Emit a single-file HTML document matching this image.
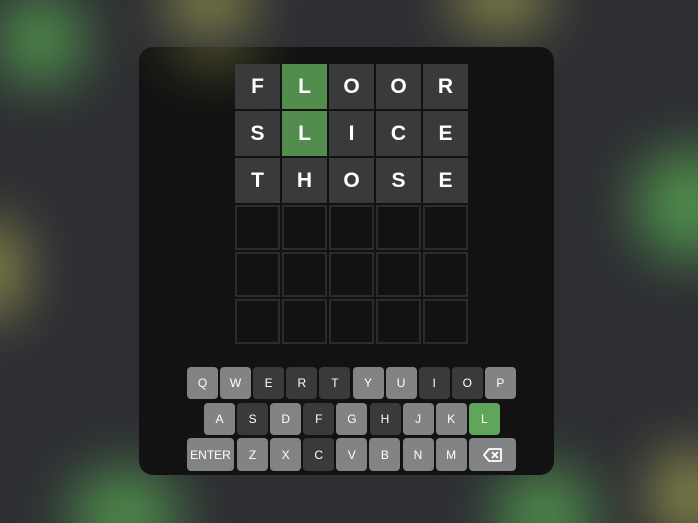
<!DOCTYPE html>
<html><head><meta charset="utf-8"><style>
*{margin:0;padding:0;box-sizing:border-box}
html,body{width:698px;height:523px;overflow:hidden}
body{background:#2e2f33;font-family:"Liberation Sans",sans-serif}
#wrap{position:relative;width:698px;height:523px;overflow:hidden}
.blob{position:absolute;border-radius:50%;filter:blur(28px)}
.g{background:#4f8f4c}
.y{background:#8a8a4c}
#panel{position:absolute;left:139px;top:47px;width:415px;height:428px;background:#121212;border-radius:14px;overflow:hidden}
.tile{position:absolute;width:45px;height:45px;display:flex;align-items:center;justify-content:center;color:#fff;font-weight:bold;font-size:21px;background:#3a3a3c}
.tile.gr{background:#538d4e}
.tile.e{background:#121212;border:2px solid #2c2c2e}
.key{position:absolute;height:32px;border-radius:4px;display:flex;align-items:center;justify-content:center;color:#fff;font-size:12px;background:#818384}
.key.d{background:#3a3a3c}
.key.gr{background:#5fa65c}
</style></head><body><div id="wrap">
<div class="blob g" style="left:-5px;top:-5px;width:90px;height:90px"></div>
<div class="blob y" style="left:165px;top:-30px;width:90px;height:65px"></div>
<div class="blob y" style="left:450px;top:-35px;width:100px;height:65px"></div>
<div class="blob g" style="left:635px;top:150px;width:110px;height:110px"></div>
<div class="blob y" style="left:-45px;top:220px;width:70px;height:100px"></div>
<div class="blob g" style="left:70px;top:470px;width:110px;height:90px"></div>
<div class="blob g" style="left:495px;top:470px;width:100px;height:90px"></div>
<div class="blob y" style="left:650px;top:450px;width:80px;height:90px"></div>
<div id="panel">
<div class="blob y" style="left:30px;top:-40px;width:90px;height:60px;opacity:.6"></div>
</div>
<div id="grid"></div>
<div id="kb"></div>
</div>
<script>
var rows=[["F","L","O","O","R"],["S","L","I","C","E"],["T","H","O","S","E"]];
var h="";
for(var r=0;r<6;r++)for(var c=0;c<5;c++){
 var x=235+c*47,y=64+r*47;
 if(r<3){var gr=(c==1&&r<2)?" gr":"";h+='<div class="tile'+gr+'" style="left:'+x+'px;top:'+y+'px">'+rows[r][c]+'</div>';}
 else h+='<div class="tile e" style="left:'+x+'px;top:'+y+'px"></div>';
}
document.getElementById("grid").innerHTML=h;
var k="";
var r1="QWERTYUIOP",d1="..ddd..dd.";
for(var i=0;i<10;i++)k+='<div class="key'+(d1[i]=="d"?" d":"")+'" style="left:'+(187+i*33.1)+'px;top:367px;width:31px">'+r1[i]+'</div>';
var r2="ASDFGHJKL",d2=".d.d.d..g";
for(var i=0;i<9;i++)k+='<div class="key'+(d2[i]=="d"?" d":d2[i]=="g"?" gr":"")+'" style="left:'+(204+i*33.1)+'px;top:403px;width:31px">'+r2[i]+'</div>';
k+='<div class="key" style="left:187px;top:438px;width:47px;height:33px">ENTER</div>';
var r3="ZXCVBNM",d3="..d....";
for(var i=0;i<7;i++)k+='<div class="key'+(d3[i]=="d"?" d":"")+'" style="left:'+(237+i*33.1)+'px;top:438px;width:31px;height:33px">'+r3[i]+'</div>';
k+='<div class="key" style="left:469px;top:438px;width:47px;height:33px"><svg width="20" height="14" viewBox="0 0 20 14"><path d="M6 1H18V13H6L1 7Z" fill="none" stroke="#fff" stroke-width="1.8" stroke-linejoin="round"/><path d="M9 4L15 10M15 4L9 10" stroke="#fff" stroke-width="1.8"/></svg></div>';
document.getElementById("kb").innerHTML=k;
</script>
</body></html>
